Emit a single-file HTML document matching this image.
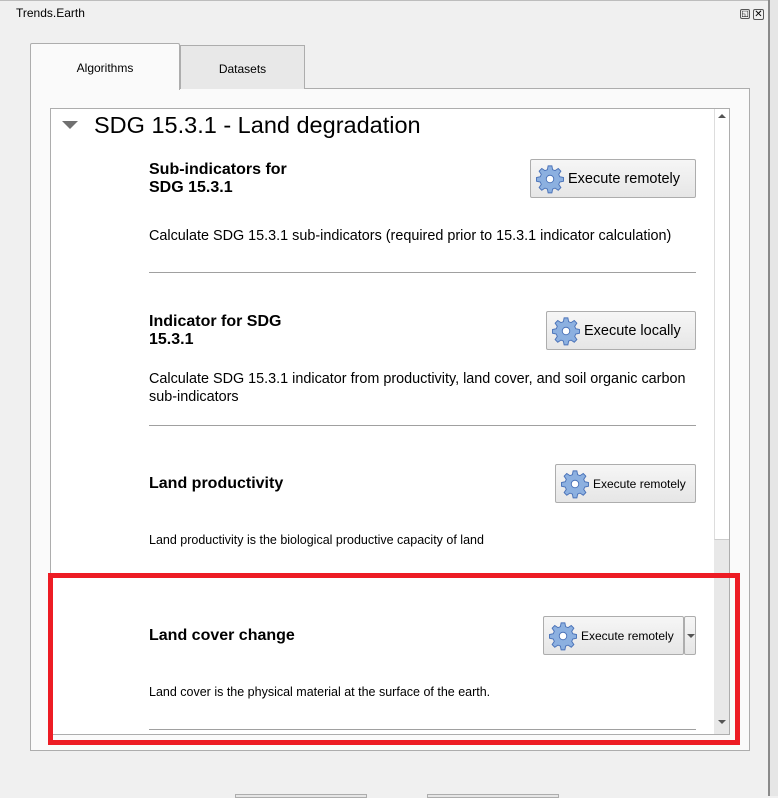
<!DOCTYPE html>
<html><head><meta charset="utf-8"><style>
*{margin:0;padding:0;box-sizing:border-box}
body{width:778px;height:796px;background:#f0f0f0;position:relative;overflow:hidden;font-family:"Liberation Sans",sans-serif;color:#000}
.a{position:absolute}
.btn{position:absolute;border:1px solid #adadad;border-radius:2px;background:linear-gradient(#f6f6f6,#e6e6e6);display:flex;align-items:center;white-space:nowrap}
.btn svg{margin:0 3px 0 4px}
.t{position:absolute;font-weight:bold;font-size:16px;line-height:18px}
.d{position:absolute;font-size:14.4px;line-height:18px;white-space:nowrap}
.s{position:absolute;font-size:12.5px;white-space:nowrap}
.hr{position:absolute;left:149px;width:547px;height:1px;background:#a0a0a0}
</style></head><body>
<svg width="0" height="0" style="position:absolute"><defs><g id="g"><g fill="#8cb0e0" stroke="#4a72b8" stroke-width="1">
<path d="M14 2h4l.8 4 2.6 1.1 3.4-2.3 2.8 2.8-2.3 3.4 1.1 2.6 4 .8v4l-4 .8-1.1 2.6 2.3 3.4-2.8 2.8-3.4-2.3-2.6 1.1-.8 4h-4l-.8-4-2.6-1.1-3.4 2.3-2.8-2.8 2.3-3.4-1.1-2.6-4-.8v-4l4-.8 1.1-2.6-2.3-3.4 2.8-2.8 3.4 2.3 2.6-1.1z"/></g><circle cx="16" cy="16" r="4" fill="#fff" stroke="#4a72b8"/></g></defs></svg>
<div class="a" style="left:0;top:0;width:778px;height:1px;background:#bdbdbd"></div>
<div class="a" style="left:768px;top:0;width:2px;height:796px;background:#8a8a8a"></div>
<div class="a" style="left:770px;top:0;width:8px;height:796px;background:#e6e6e6"></div>
<div class="a" style="left:16px;top:6px;font-size:12px">Trends.Earth</div>
<div class="a" style="left:740px;top:9px;width:10px;height:10px;border:1px solid #555;border-radius:2px;font-size:8px;line-height:8px;text-align:center">◱</div>
<div class="a" style="left:753px;top:9px;width:11px;height:11px;border:1px solid #555;border-radius:2px;font-size:10px;line-height:9px;text-align:center">✕</div>
<div class="a" style="left:30px;top:88px;width:720px;height:663px;border:1px solid #adadad;background:#fafafa"></div>
<div class="a" style="left:180px;top:45px;width:125px;height:44px;border:1px solid #adadad;border-bottom:none;background:#e8e8e8;font-size:12px;text-align:center;line-height:46px">Datasets</div>
<div class="a" style="left:30px;top:43px;width:150px;height:47px;border:1px solid #adadad;border-bottom:none;background:#fafafa;font-size:12px;text-align:center;line-height:48px;border-radius:2px 2px 0 0">Algorithms</div>
<div class="a" style="left:50px;top:108px;width:680px;height:627px;border:1px solid #adadad;background:#fff"></div>
<div class="a" style="left:714px;top:109px;width:15px;height:625px;background:#e8e8e8"></div>
<div class="a" style="left:714px;top:109px;width:15px;height:431px;background:#fff;border-left:1px solid #ddd;border-bottom:1px solid #ccc"></div>
<div class="a" style="left:718px;top:114px;width:0;height:0;border-left:4px solid transparent;border-right:4px solid transparent;border-bottom:4px solid #555"></div>
<div class="a" style="left:718px;top:720px;width:0;height:0;border-left:4px solid transparent;border-right:4px solid transparent;border-top:4px solid #555"></div>
<div class="a" style="left:62px;top:121px;width:0;height:0;border-left:8px solid transparent;border-right:8px solid transparent;border-top:8px solid #707070"></div>
<div class="a" style="left:94px;top:112px;font-size:23.5px;white-space:nowrap">SDG 15.3.1 - Land degradation</div>
<div class="t" style="left:149px;top:161px">Sub-indicators for<br>SDG 15.3.1</div>
<div class="btn" style="left:530px;top:159px;width:166px;height:39px;font-size:14.5px"><svg width="30" height="30" viewBox="0 0 32 32"><use href="#g"/></svg>Execute remotely</div>
<div class="d" style="left:149px;top:227px">Calculate SDG 15.3.1 sub-indicators (required prior to 15.3.1 indicator calculation)</div>
<div class="hr" style="top:272px"></div>
<div class="t" style="left:149px;top:313px">Indicator for SDG<br>15.3.1</div>
<div class="btn" style="left:546px;top:311px;width:150px;height:39px;font-size:14.5px"><svg width="30" height="30" viewBox="0 0 32 32"><use href="#g"/></svg>Execute locally</div>
<div class="d" style="left:149px;top:370px">Calculate SDG 15.3.1 indicator from productivity, land cover, and soil organic carbon<br>sub-indicators</div>
<div class="hr" style="top:425px"></div>
<div class="t" style="left:149px;top:475px">Land productivity</div>
<div class="btn" style="left:555px;top:464px;width:141px;height:39px;font-size:12px"><svg width="30" height="30" viewBox="0 0 32 32"><use href="#g"/></svg>Execute remotely</div>
<div class="s" style="left:149px;top:533px">Land productivity is the biological productive capacity of land</div>
<div class="t" style="left:149px;top:627px">Land cover change</div>
<div class="btn" style="left:543px;top:616px;width:141px;height:39px;font-size:12px"><svg width="30" height="30" viewBox="0 0 32 32"><use href="#g"/></svg>Execute remotely</div>
<div class="btn" style="left:684px;top:616px;width:12px;height:39px"><div style="margin-left:2px;border-left:4px solid transparent;border-right:4px solid transparent;border-top:4px solid #555"></div></div>
<div class="s" style="left:149px;top:685px">Land cover is the physical material at the surface of the earth.</div>
<div class="hr" style="top:729px"></div>
<div class="a" style="left:48px;top:573px;width:692px;height:172px;border:5px solid #ed1c24"></div>
<div class="a" style="left:235px;top:794px;width:132px;height:4px;border:1px solid #adadad;background:#e6e6e6"></div>
<div class="a" style="left:427px;top:794px;width:132px;height:4px;border:1px solid #adadad;background:#e6e6e6"></div>
</body></html>
